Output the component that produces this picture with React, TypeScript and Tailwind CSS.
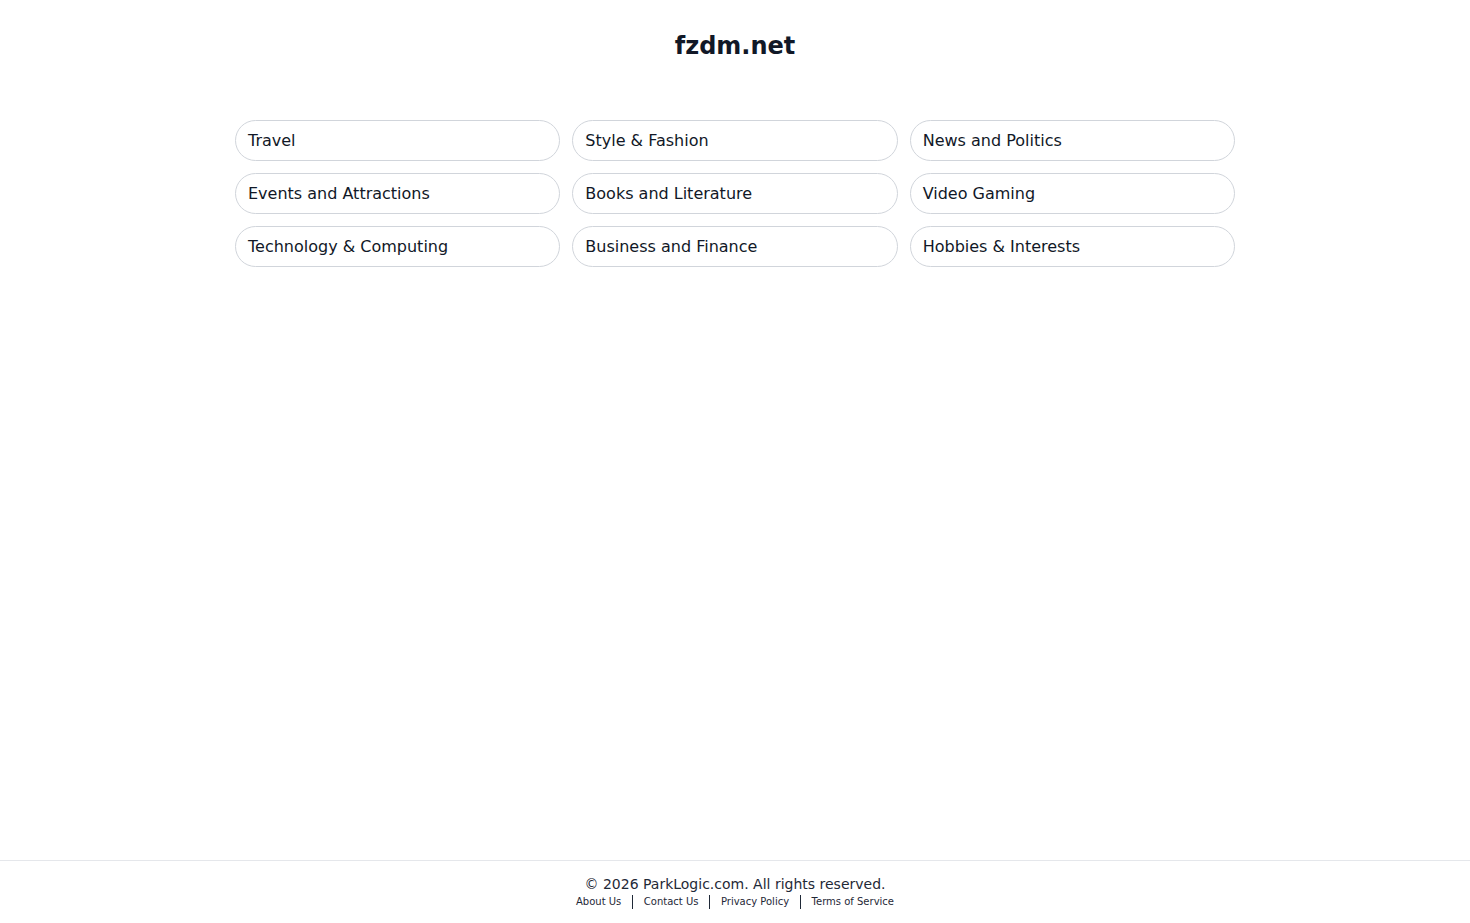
import React from 'react'

const categories = [
  'Travel',
  'Style & Fashion',
  'News and Politics',
  'Events and Attractions',
  'Books and Literature',
  'Video Gaming',
  'Technology & Computing',
  'Business and Finance',
  'Hobbies & Interests',
]

const links = ['About Us', 'Contact Us', 'Privacy Policy', 'Terms of Service']

export default function App() {
  return (
    <div
      className="min-h-screen flex flex-col bg-white text-[#111827]"
      style={{ fontFamily: '"DejaVu Sans", sans-serif' }}
    >
      {/* Header */}
      <header className="h-[90px] pt-[2px] flex items-center justify-center">
        <h1 className="text-[24px] font-bold leading-8 text-[#111827]">fzdm.net</h1>
      </header>

      {/* Category grid */}
      <main className="flex-1 pt-[30px]">
        <div className="w-[1000px] mx-auto grid grid-cols-3 gap-3">
          {categories.map((c) => (
            <a
              key={c}
              href="#"
              className="h-[41px] flex items-center px-3 border border-[#d1d5db] rounded-full text-[16px] text-[#111827]"
            >
              {c}
            </a>
          ))}
        </div>
      </main>

      {/* Footer */}
      <footer className="h-[63px] border-t border-[#e5e7eb] flex flex-col items-center pt-[13px]">
        <p className="text-[14px] leading-5 text-[#1f2937]">© 2026 ParkLogic.com. All rights reserved.</p>
        <div className="flex items-center pt-[1px] text-[10px] leading-[14px] text-[#1f2937]">
          {links.map((l, i) => (
            <React.Fragment key={l}>
              {i > 0 && <span className="w-[1.5px] h-[14px] bg-[#1f2937] mx-[10.5px]" />}
              <a href="#">{l}</a>
            </React.Fragment>
          ))}
        </div>
      </footer>
    </div>
  )
}
